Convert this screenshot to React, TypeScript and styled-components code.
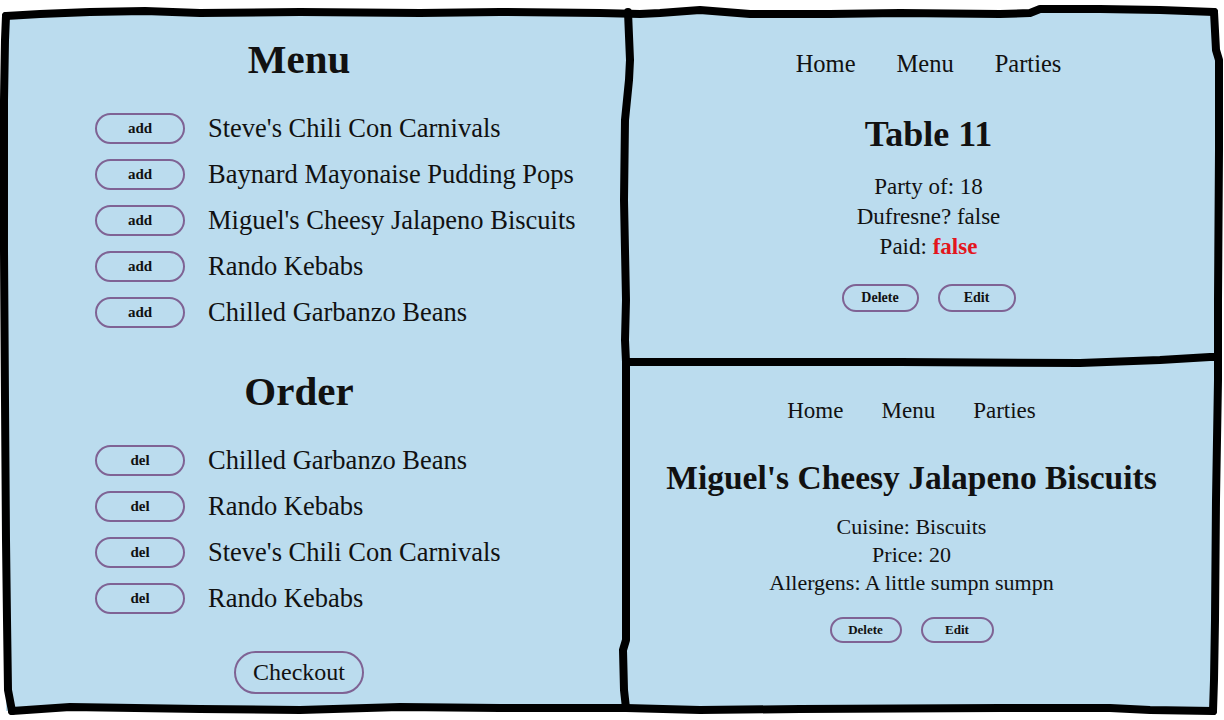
import React from "react";
import styled, { createGlobalStyle } from "styled-components";

// Data --------------------------------------------------------------------------

const menu = [
  "Steve's Chili Con Carnivals",
  "Baynard Mayonaise Pudding Pops",
  "Miguel's Cheesy Jalapeno Biscuits",
  "Rando Kebabs",
  "Chilled Garbanzo Beans",
];

const order = [
  "Chilled Garbanzo Beans",
  "Rando Kebabs",
  "Steve's Chili Con Carnivals",
  "Rando Kebabs",
];

// hand drawn frame lines
const strokes = [
  // top
  "6,16 40,14 90,12 145,11 200,13 300,12 420,13 500,12 600,13 640,14 660,13 700,10 750,14 830,14 900,13 1000,14 1030,13 1040,9 1100,9 1160,10 1214,12",
  // right
  "1214,12 1216,50 1219,60 1219,150 1218,300 1218,380 1216,500 1215,620 1214,680 1213,711",
  // bottom
  "1213,711 1150,710 1110,708 1000,708 800,709 700,710 626,708 500,708 400,707 300,710 200,709 70,707 12,711",
  // left
  "12,711 8,690 7,620 6,540 5,400 4,250 4,100 5,40 6,16",
  // middle vertical
  "628,12 630,60 629,80 625,120 624,200 626,300 625,340 626,362 626,400 626,640 623,650 624,690 626,708",
  // right horizontal
  "626,362 700,362 900,362 1080,363 1160,360 1210,357 1216,357",
];

// Component ---------------------------------------------------------------------

const App = () => {
  return (
    <>
      <GlobalStyle />
      <Page>
        <Board>
          <LeftPanel>
            <Heading>Menu</Heading>
            <List>
              {menu.map((item, i) => (
                <Row key={i}>
                  <SmallButton>add</SmallButton>
                  <ItemName>{item}</ItemName>
                </Row>
              ))}
            </List>
            <Heading $gap={32}>Order</Heading>
            <List>
              {order.map((item, i) => (
                <Row key={i}>
                  <SmallButton>del</SmallButton>
                  <ItemName>{item}</ItemName>
                </Row>
              ))}
            </List>
            <CheckoutButton>Checkout</CheckoutButton>
          </LeftPanel>

          <TablePanel>
            <Nav $gap={41} $size={24.5}>
              <NavLink>Home</NavLink>
              <NavLink>Menu</NavLink>
              <NavLink>Parties</NavLink>
            </Nav>
            <Title $size={36} $gap={35}>
              Table 11
            </Title>
            <Info $size={23} $line={30} $gap={18}>
              <div>Party of: 18</div>
              <div>Dufresne? false</div>
              <div>
                Paid: <Red>false</Red>
              </div>
            </Info>
            <Actions $gap={22}>
              <ActionButton $w={77} $h={28}>Delete</ActionButton>
              <ActionButton $w={78} $h={28}>Edit</ActionButton>
            </Actions>
          </TablePanel>

          <ItemPanel>
            <Nav $gap={38} $size={23}>
              <NavLink>Home</NavLink>
              <NavLink>Menu</NavLink>
              <NavLink>Parties</NavLink>
            </Nav>
            <Title $size={33.5} $gap={32}>
              Miguel's Cheesy Jalapeno Biscuits
            </Title>
            <Info $size={22} $line={28} $gap={15}>
              <div>Cuisine: Biscuits</div>
              <div>Price: 20</div>
              <div>Allergens: A little sumpn sumpn</div>
            </Info>
            <Actions $gap={20}>
              <ActionButton $w={72} $h={26} $small>
                Delete
              </ActionButton>
              <ActionButton $w={73} $h={26} $small>
                Edit
              </ActionButton>
            </Actions>
          </ItemPanel>
        </Board>

        <Sketch viewBox="0 0 1224 720" width={1224} height={720}>
          {strokes.map((pts, i) => (
            <polyline
              key={i}
              points={pts}
              fill="none"
              stroke="#000"
              strokeWidth={8}
              strokeLinejoin="round"
              strokeLinecap="round"
            />
          ))}
        </Sketch>
      </Page>
    </>
  );
};

export default App;

// Styled ------------------------------------------------------------------------

const blue = "#bbdcee";
const purple = "#7f6394";

const GlobalStyle = createGlobalStyle`
  body {
    margin: 0;
    background: #fff;
    font-family: "Liberation Serif", "Times New Roman", serif;
    color: #111;
  }
`;

const Page = styled.div`
  position: relative;
  width: 1224px;
  height: 720px;
  padding: 12px 7px 9px 6px;
  box-sizing: border-box;
  background: #fff;
`;

const Board = styled.div`
  height: 100%;
  background: ${blue};
  display: grid;
  grid-template-columns: 620px 1fr;
  grid-template-rows: 350px 1fr;
`;

const Sketch = styled.svg`
  position: absolute;
  top: 0;
  left: 0;
  pointer-events: none;
`;

const LeftPanel = styled.section`
  grid-row: 1 / span 2;
  display: flex;
  flex-direction: column;
  align-items: center;
  padding: 23px 34px 0 0;
`;

const Heading = styled.h1<{ $gap?: number }>`
  margin: ${({ $gap }) => $gap ?? 0}px 0 0;
  font-size: 41px;
  line-height: 48px;
  font-weight: 700;
`;

const List = styled.div`
  align-self: flex-start;
  margin: 22px 0 0 89px;
  display: flex;
  flex-direction: column;
`;

const Row = styled.div`
  height: 46px;
  display: flex;
  align-items: center;
  gap: 23px;
`;

const SmallButton = styled.button`
  width: 90px;
  height: 31px;
  border: 2px solid ${purple};
  border-radius: 16px;
  background: transparent;
  font-family: inherit;
  font-weight: 700;
  font-size: 15px;
  color: #111;
  padding: 0;
`;

const ItemName = styled.span`
  font-size: 26.5px;
  white-space: nowrap;
`;

const CheckoutButton = styled.button`
  margin-top: 30px;
  width: 130px;
  height: 43px;
  border: 2px solid ${purple};
  border-radius: 22px;
  background: transparent;
  font-family: inherit;
  font-size: 24px;
  color: #111;
  padding: 0;
`;

const TablePanel = styled.section`
  display: flex;
  flex-direction: column;
  align-items: center;
  padding: 37px 0 0 14px;
`;

const ItemPanel = styled.section`
  display: flex;
  flex-direction: column;
  align-items: center;
  padding: 34px 20px 0 0;
`;

const Nav = styled.nav<{ $gap: number; $size: number }>`
  display: flex;
  gap: ${({ $gap }) => $gap}px;
  font-size: ${({ $size }) => $size}px;
  line-height: 30px;
`;

const NavLink = styled.span`
  color: #111;
`;

const Title = styled.h2<{ $size: number; $gap: number }>`
  margin: ${({ $gap }) => $gap}px 0 0;
  font-size: ${({ $size }) => $size}px;
  line-height: 40px;
  font-weight: 700;
  white-space: nowrap;
`;

const Info = styled.div<{ $size: number; $line: number; $gap: number }>`
  margin-top: ${({ $gap }) => $gap}px;
  font-size: ${({ $size }) => $size}px;
  line-height: ${({ $line }) => $line}px;
  text-align: center;
`;

const Red = styled.b`
  color: #e3151c;
`;

const Actions = styled.div<{ $gap: number }>`
  margin-top: ${({ $gap }) => $gap}px;
  display: flex;
  gap: 19px;
`;

const ActionButton = styled.button<{ $w: number; $h: number; $small?: boolean }>`
  width: ${({ $w }) => $w}px;
  height: ${({ $h }) => $h}px;
  border: 2px solid ${purple};
  border-radius: ${({ $h }) => $h / 2}px;
  background: transparent;
  font-family: inherit;
  font-weight: 700;
  font-size: ${({ $small }) => ($small ? 13 : 14)}px;
  color: #111;
  padding: 0;
`;
